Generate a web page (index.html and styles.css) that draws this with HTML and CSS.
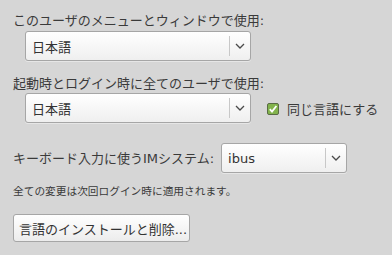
FILE: index.html
```html
<!DOCTYPE html>
<html lang="ja">
<head>
<meta charset="utf-8">
<link rel="stylesheet" href="styles.css">
</head>
<body>
<div class="page">
  <div class="label l1">このユーザのメニューとウィンドウで使用:</div>
  <div class="row indent">
    <div class="combo wide"><span class="val">日本語</span><span class="sep"></span><svg class="chev" width="10" height="6" viewBox="0 0 10 6"><path d="M1 1 L5 5 L9 1" fill="none" stroke="#4a4a4a" stroke-width="1.3"/></svg></div>
  </div>
  <div class="label l2">起動時とログイン時に全てのユーザで使用:</div>
  <div class="row indent">
    <div class="combo wide"><span class="val">日本語</span><span class="sep"></span><svg class="chev" width="10" height="6" viewBox="0 0 10 6"><path d="M1 1 L5 5 L9 1" fill="none" stroke="#4a4a4a" stroke-width="1.3"/></svg></div>
    <label class="check"><span class="box"><svg width="10" height="10" viewBox="0 0 10 10"><path d="M1.8 5.2 L4 7.6 L8.4 2" fill="none" stroke="#ffffff" stroke-width="1.8"/></svg></span>同じ言語にする</label>
  </div>
  <div class="row imrow">
    <span class="label">キーボード入力に使うIMシステム:</span>
    <div class="combo narrow"><span class="val">ibus</span><span class="sep"></span><svg class="chev" width="10" height="6" viewBox="0 0 10 6"><path d="M1 1 L5 5 L9 1" fill="none" stroke="#4a4a4a" stroke-width="1.3"/></svg></div>
  </div>
  <div class="note">全ての変更は次回ログイン時に適用されます。</div>
  <button class="btn">言語のインストールと削除...</button>
</div>
</body>
</html>
```

FILE: styles.css
```css
html, body {
  margin: 0;
  padding: 0;
  background: #d6d6d6;
}
.page {
  width: 392px;
  height: 255px;
  box-sizing: border-box;
  padding: 13px 0 0 13px;
  font-family: "DejaVu Sans", "Noto Sans CJK JP", sans-serif;
  font-size: 13px;
  color: #3a3a3a;
  display: flex;
  flex-direction: column;
  align-items: flex-start;
}
.label {
  line-height: 15px;
  white-space: nowrap;
}
.l1 { margin-bottom: 3px; }
.l2 { margin-top: 15px; margin-bottom: 2px; }
.row {
  display: flex;
  align-items: center;
}
.indent { padding-left: 12px; }
.combo {
  box-sizing: border-box;
  height: 30px;
  border: 1px solid #a6a6a6;
  border-radius: 3px;
  background: linear-gradient(#ffffff, #efefef);
  display: flex;
  align-items: center;
  box-shadow: 0 1px 0 rgba(255,255,255,0.4);
}
.combo .val {
  flex: 1;
  padding-left: 6px;
  color: #333;
}
.combo .sep {
  width: 1px;
  align-self: stretch;
  margin: 4px 0;
  background: #c8c8c8;
}
.combo .chev {
  display: block;
  margin: 0 5px 0 5px;
}
.wide { width: 226px; }
.narrow { width: 126px; }
.check {
  display: flex;
  align-items: center;
  margin-left: 16px;
  margin-top: 1px;
}
.box {
  box-sizing: border-box;
  width: 12px;
  height: 12px;
  border: 1px solid #5a6b45;
  border-radius: 2px;
  background: #82b34c;
  display: flex;
  align-items: center;
  justify-content: center;
  margin-right: 8px;
}
.box svg { display: block; }
.imrow {
  margin-top: 20px;
}
.imrow .combo { margin-left: 7px; }
.note {
  margin-top: 12px;
  font-size: 10.7px;
  line-height: 14px;
}
.btn {
  margin-top: 15px;
  box-sizing: border-box;
  height: 28px;
  width: 177px;
  padding: 0 0 0 5px;
  text-align: left;
  font-family: "DejaVu Sans", "Noto Sans CJK JP", sans-serif;
  font-size: 13px;
  color: #333;
  border: 1px solid #a6a6a6;
  border-radius: 3px;
  background: linear-gradient(#ffffff, #ececec);
}
```
